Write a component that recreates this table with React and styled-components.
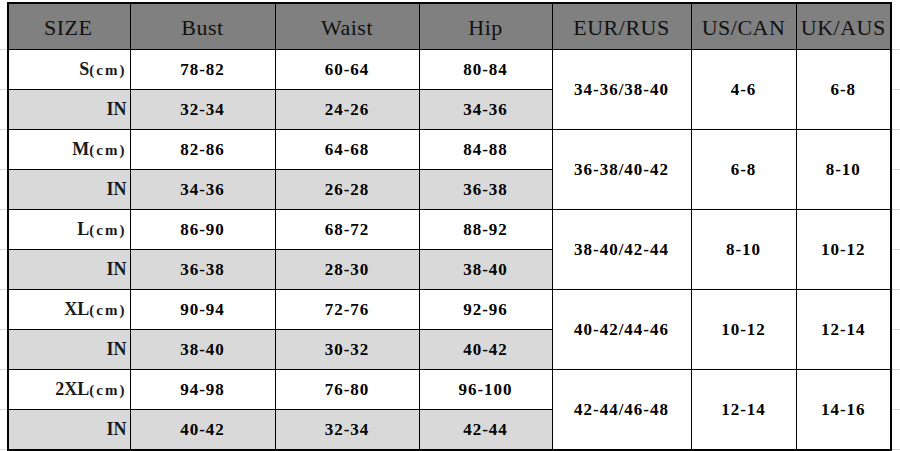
import styled, { createGlobalStyle } from "styled-components";

const GlobalStyle = createGlobalStyle`
    html, body {
        margin: 0;
        padding: 0;
    }
    body {
        width: 900px;
        height: 451px;
        overflow: hidden;
        background-color: #ffffff;
        background-image:
            linear-gradient(#ffffff, #ffffff),
            repeating-linear-gradient(to bottom, #d6d6d6 0 1px, transparent 1px 40px);
        background-size: 100% 40px, 100% 100%;
        background-position: 0 0, 0 9px;
        background-repeat: no-repeat, repeat;
    }
`

const Sheet = styled.div`
    padding: 2px 0 0 7px;
`

const Table = styled.table`
    border-collapse: collapse;
    table-layout: fixed;
    border: 2px solid #000;
    font-family: "Liberation Serif", "Times New Roman", serif;
    color: #000;
`

const HeadCell = styled.th`
    height: 43px;
    padding: 2px 0 0 0;
    background-color: #808080;
    border: 1px solid #000;
    font-size: 22px;
    font-weight: 400;
    letter-spacing: 0.5px;
    color: #111;
    text-align: ${(p) => (p.$left ? "left" : "center")};
    padding-left: ${(p) => (p.$left ? "35px" : "0")};
    vertical-align: middle;
`

const LabelCell = styled.td`
    height: 39px;
    padding: 0 3px 0 0;
    border: 1px solid #000;
    background-color: ${(p) => (p.$shade ? "#d9d9d9" : "#ffffff")};
    text-align: right;
    font-size: 18px;
    font-weight: 700;
    color: #1a1a1a;
    white-space: nowrap;
`

const Unit = styled.span`
    font-size: 15px;
    letter-spacing: 2px;
`

const ValueCell = styled.td`
    padding: 0;
    border: 1px solid #000;
    background-color: ${(p) => (p.$shade ? "#d9d9d9" : "#ffffff")};
    text-align: center;
    font-size: 17px;
    font-weight: 700;
    letter-spacing: 1px;
    white-space: nowrap;
`

const widths = [122, 145, 144, 133, 139, 105, 95]
const headers = ["SIZE", "Bust", "Waist", "Hip", "EUR/RUS", "US/CAN", "UK/AUS"]

const sizes = [
    { size: "S", cm: ["78-82", "60-64", "80-84"], inch: ["32-34", "24-26", "34-36"], eur: "34-36/38-40", us: "4-6", uk: "6-8" },
    { size: "M", cm: ["82-86", "64-68", "84-88"], inch: ["34-36", "26-28", "36-38"], eur: "36-38/40-42", us: "6-8", uk: "8-10" },
    { size: "L", cm: ["86-90", "68-72", "88-92"], inch: ["36-38", "28-30", "38-40"], eur: "38-40/42-44", us: "8-10", uk: "10-12" },
    { size: "XL", cm: ["90-94", "72-76", "92-96"], inch: ["38-40", "30-32", "40-42"], eur: "40-42/44-46", us: "10-12", uk: "12-14" },
    { size: "2XL", cm: ["94-98", "76-80", "96-100"], inch: ["40-42", "32-34", "42-44"], eur: "42-44/46-48", us: "12-14", uk: "14-16" },
]

const App = () => {
    return (
        <>
        <GlobalStyle />
        <Sheet>
            <Table>
                <colgroup>
                    {widths.map((w, i) => <col key={i} style={{ width: w }} />)}
                </colgroup>
                <thead>
                    <tr>
                        {headers.map((h, i) => (
                            <HeadCell key={h} $left={i === 0}>{h}</HeadCell>
                        ))}
                    </tr>
                </thead>
                <tbody>
                    {
                        sizes.map((s) => [
                            <tr key={s.size + "cm"}>
                                <LabelCell>{s.size}<Unit>(cm)</Unit></LabelCell>
                                {s.cm.map((v, i) => <ValueCell key={i}>{v}</ValueCell>)}
                                <ValueCell rowSpan={2}>{s.eur}</ValueCell>
                                <ValueCell rowSpan={2}>{s.us}</ValueCell>
                                <ValueCell rowSpan={2}>{s.uk}</ValueCell>
                            </tr>,
                            <tr key={s.size + "in"}>
                                <LabelCell $shade>IN</LabelCell>
                                {s.inch.map((v, i) => <ValueCell key={i} $shade>{v}</ValueCell>)}
                            </tr>
                        ])
                    }
                </tbody>
            </Table>
        </Sheet>
        </>
    )
}

export default App;
